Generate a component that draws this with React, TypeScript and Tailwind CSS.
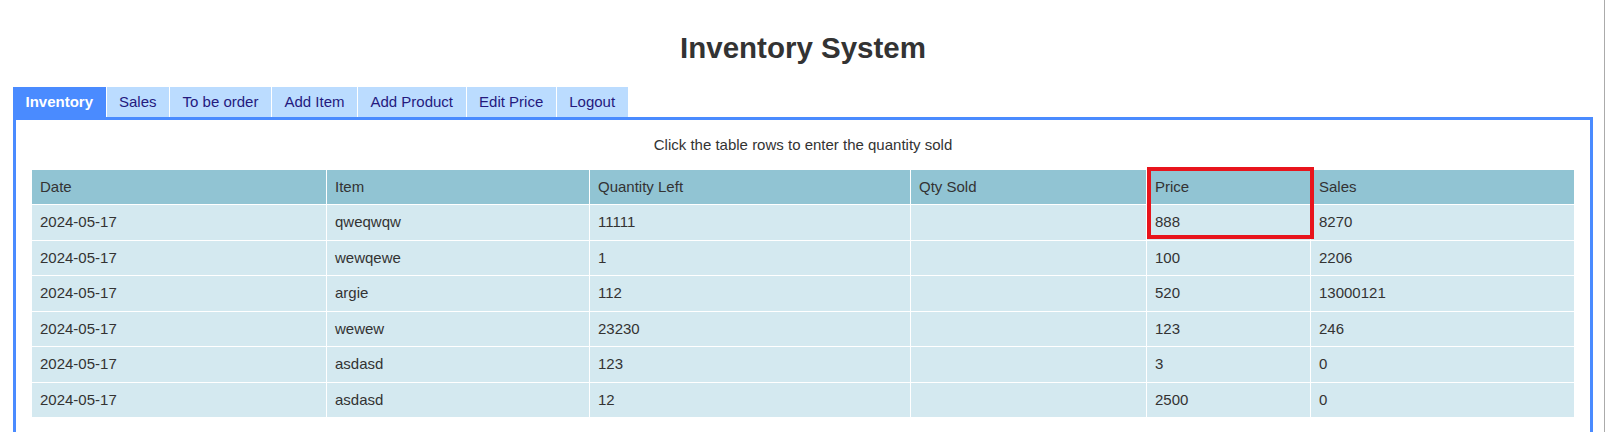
import React from "react";

const tabs = ["Inventory", "Sales", "To be order", "Add Item", "Add Product", "Edit Price", "Logout"];

const columns = ["Date", "Item", "Quantity Left", "Qty Sold", "Price", "Sales"];

const rows = [
  ["2024-05-17", "qweqwqw", "11111", "", "888", "8270"],
  ["2024-05-17", "wewqewe", "1", "", "100", "2206"],
  ["2024-05-17", "argie", "112", "", "520", "13000121"],
  ["2024-05-17", "wewew", "23230", "", "123", "246"],
  ["2024-05-17", "asdasd", "123", "", "3", "0"],
  ["2024-05-17", "asdasd", "12", "", "2500", "0"],
];

const grid = "grid grid-cols-[294px_263px_321px_236px_164px_264px]";

const App: React.FC = () => {
  return (
    <div className="min-h-[432px] w-full border-r border-[#ababab] bg-white pl-[13px] pr-[11px] pt-[31px] font-['Liberation_Sans',Arial,sans-serif] text-[#333]">
      {/* Title */}
      <h1 className="text-center text-[29.5px] font-bold leading-[34px] text-[#333]">Inventory System</h1>

      {/* Tabs */}
      <div className="mt-[22px] flex gap-px">
        {tabs.map((t, i) => (
          <button
            key={t}
            className={
              i === 0
                ? "h-[30px] bg-[#4a8bff] px-[12.5px] text-[15px] font-bold text-white"
                : "h-[30px] bg-[#bbdcff] px-[12.5px] text-[15px] text-[#24197e]"
            }
          >
            {t}
          </button>
        ))}
      </div>

      {/* Panel */}
      <div className="border-[3px] border-[#4a8bff] px-4 pb-10 pt-[15.5px]">
        <p className="text-center text-[15px] leading-[17px] text-[#333]">
          Click the table rows to enter the quantity sold
        </p>

        <div className="relative mt-[17.5px] text-[15px] text-[#333]">
          {/* Header */}
          <div className={`${grid} h-[34px] bg-[#91c4d3]`}>
            {columns.map((c, i) => (
              <div key={c} className={`flex items-center px-2 ${i > 0 ? "border-l border-white" : ""}`}>
                {c}
              </div>
            ))}
          </div>

          {/* Rows */}
          {rows.map((r, ri) => (
            <div key={ri} className={`${grid} h-[35.5px] cursor-pointer border-t border-white bg-[#d4e9f0]`}>
              {r.map((v, i) => (
                <div key={i} className={`flex items-center px-2 ${i > 0 ? "border-l border-white" : ""}`}>
                  {v}
                </div>
              ))}
            </div>
          ))}

          {/* Highlight */}
          <div className="pointer-events-none absolute left-[1115px] top-[-3px] h-[72px] w-[167px] border-[4px] border-[#e8141c]" />
        </div>
      </div>
    </div>
  );
};

export default App;
